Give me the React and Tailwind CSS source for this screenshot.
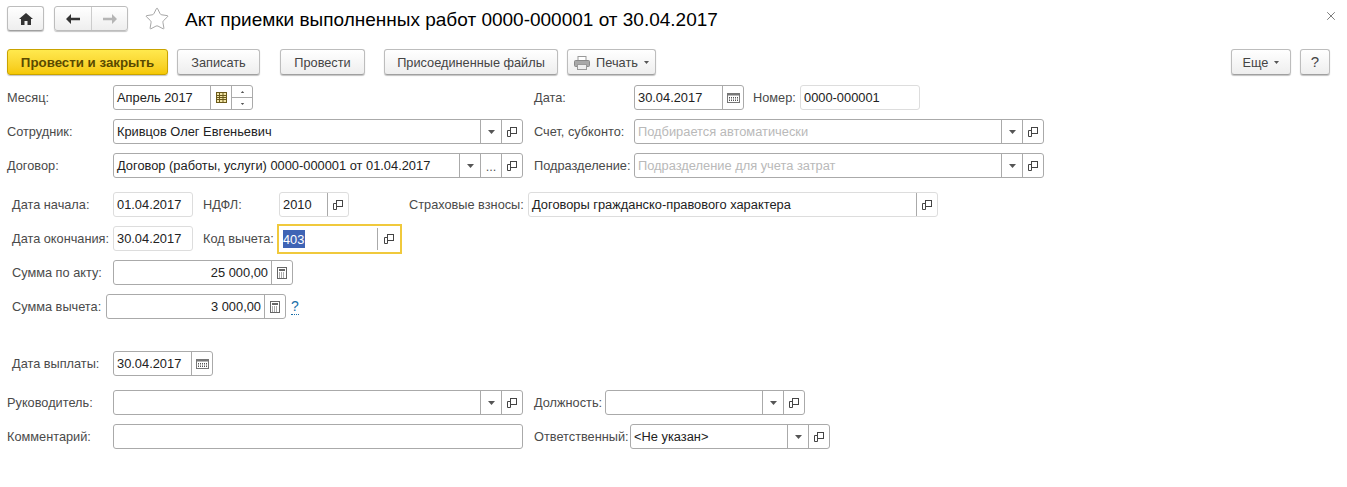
import React from 'react';
import { Star, X } from 'lucide-react';

// --- иконки ---
const HomeIcon = () => (
  <svg width="14" height="12" viewBox="0 0 14 12" fill="#333">
    <path d="M7 0 L14 6 L12 6 L12 12 L8.5 12 L8.5 8 L5.5 8 L5.5 12 L2 12 L2 6 L0 6 Z" />
  </svg>
);

const ArrowIcon = ({ dir, color }) => (
  <svg width="14" height="10" viewBox="0 0 14 10" fill={color} className={dir === 'right' ? 'rotate-180' : ''}>
    <path d="M0 5 L5 0 L5 3.7 L14 3.7 L14 6.3 L5 6.3 L5 10 Z" />
  </svg>
);

const Caret = ({ w = 7, h = 4 }) => (
  <svg width={w} height={h} viewBox="0 0 7 4" fill="#555"><path d="M0 0 H7 L3.5 4 Z" /></svg>
);

const OpenIcon = () => (
  <svg width="10" height="10" viewBox="0 0 10 10" fill="none" stroke="#444" strokeWidth="1">
    <rect x="3.5" y="0.5" width="6" height="6" fill="white" />
    <path d="M3.5 3.5 H0.5 V9.5 H3.5 V6.5" />
  </svg>
);

const CalendarIcon = () => (
  <svg width="13" height="10" viewBox="0 0 13 10">
    <rect x="0.5" y="0.5" width="12" height="9" fill="white" stroke="#777" />
    <rect x="0.5" y="0.5" width="12" height="2" fill="#777" />
    <path d="M2 4.5h9M2 6h9M2 7.5h9" stroke="#555" strokeDasharray="1 1" />
  </svg>
);

const MonthIcon = () => (
  <svg width="11" height="11" viewBox="0 0 11 11" stroke="#6b5a1a" fill="#f3e6a8">
    <rect x="0.5" y="0.5" width="10" height="10" />
    <path d="M0.5 3.5h10M0.5 5.5h10M0.5 7.5h10M3.5 0.5v10M7 0.5v10" fill="none" />
  </svg>
);

const CalcIcon = () => (
  <svg width="10" height="12" viewBox="0 0 10 12">
    <rect x="0.5" y="0.5" width="9" height="11" fill="white" stroke="#666" />
    <rect x="2" y="2" width="6" height="2" fill="#666" />
    <path d="M2 6h6M2 8h6M2 10h6" stroke="#555" strokeDasharray="1 1" />
  </svg>
);

const PrinterIcon = () => (
  <svg width="16" height="14" viewBox="0 0 16 14">
    <rect x="4" y="0.5" width="8" height="5" fill="white" stroke="#999" />
    <rect x="0.5" y="4.5" width="15" height="6" rx="1" fill="#a8a8a8" stroke="#888" />
    <rect x="3.5" y="8.5" width="9" height="5" fill="#eee" stroke="#999" />
  </svg>
);

// --- кнопки командной панели ---
const Btn = ({ className = '', children }) => (
  <button className={`h-[26px] pt-[1px] flex items-center justify-center rounded-[3px] border border-[#bdbdbd] border-b-[#a0a0a0] bg-gradient-to-b from-white to-[#eeeeee] shadow-[0_1px_1px_#c4c4c4] text-[#444] ${className}`}>
    {children}
  </button>
);

// кнопки внутри поля
const cellIcons = {
  drop: <Caret />,
  open: <OpenIcon />,
  calendar: <CalendarIcon />,
  month: <MonthIcon />,
  calc: <CalcIcon />,
  dots: <span className="text-[#555] leading-none mt-[4px]">...</span>,
};

const Field = ({ className = '', value, placeholder, right, pale, cells = [], cellW = 'w-[21px]', spin }) => (
  <div className={`h-[25px] flex shrink-0 rounded-[3px] border bg-white ${pale ? 'border-[#dddddd]' : 'border-[#aaaaaa]'} ${className}`}>
    <div className={`flex-1 min-w-0 px-[3px] leading-[24px] text-[12.85px] whitespace-nowrap overflow-hidden text-[#222] ${right ? 'text-right' : ''}`}>
      {value}
      {placeholder && <span className="text-[#b9b9b9]">{placeholder}</span>}
    </div>
    {cells.map((c, i) => (
      <div key={i} className={`${cellW} shrink-0 flex items-center justify-center border-l ${pale && c !== 'open' ? 'border-[#dddddd]' : 'border-[#aaaaaa]'}`}>
        {cellIcons[c]}
      </div>
    ))}
    {spin && (
      <div className="w-[21px] shrink-0 flex flex-col border-l border-[#aaaaaa] text-[#555]">
        <div className="flex-1 flex items-center justify-center border-b border-[#aaaaaa]">
          <div className="rotate-180 scale-50"><Caret /></div>
        </div>
        <div className="flex-1 flex items-center justify-center">
          <div className="scale-50"><Caret /></div>
        </div>
      </div>
    )}
  </div>
);

const Label = ({ className = '', children }) => (
  <div className={`shrink-0 pt-[1px] whitespace-nowrap text-[#4a4a4a] ${className}`}>{children}</div>
);

export default function App() {
  return (
    <div className="w-[1347px] h-[487px] overflow-hidden bg-white pl-[7px] pt-[6px] text-[12.75px] font-['Liberation_Sans',Arial,sans-serif]">
      {/* заголовок */}
      <div className="h-[25px] flex items-center">
        <Btn className="w-[37px] !h-[25px] !pt-0"><HomeIcon /></Btn>
        <div className="ml-[10px] w-[74px] h-[25px] flex rounded-[3px] border border-[#bdbdbd] bg-gradient-to-b from-white to-[#eeeeee] shadow-[0_1px_1px_#c4c4c4]">
          <div className="w-[37px] flex items-center justify-center border-r border-[#cccccc]"><ArrowIcon color="#333" /></div>
          <div className="flex-1 flex items-center justify-center"><ArrowIcon dir="right" color="#b5b5b5" /></div>
        </div>
        <Star size={26} strokeWidth={0.7} color="#8a8a8a" className="ml-[16px]" />
        <h1 className="ml-[15px] pt-[3px] text-[19px] text-black whitespace-nowrap">Акт приемки выполненных работ 0000-000001 от 30.04.2017</h1>
        <X size={14} strokeWidth={1.3} color="#555" className="ml-auto mr-[9px] -mt-[6px]" />
      </div>

      {/* командная панель */}
      <div className="mt-[18px] flex items-center">
        <Btn className="w-[161px] !border-[#c9a300] !from-[#ffe94d] !to-[#f5c800] font-bold !text-[#5a4a00] text-[13.3px]">Провести и закрыть</Btn>
        <Btn className="ml-[9px] w-[83px]">Записать</Btn>
        <Btn className="ml-[20px] w-[85px]">Провести</Btn>
        <Btn className="ml-[19px] w-[174px]">Присоединенные файлы</Btn>
        <Btn className="ml-[9px] w-[89px] gap-[6px]"><PrinterIcon />Печать<Caret w={5} h={3} /></Btn>
        <Btn className="ml-auto w-[60px] gap-[6px]">Еще<Caret w={5} h={3} /></Btn>
        <Btn className="ml-[9px] mr-[17px] w-[30px] text-[15px]">?</Btn>
      </div>

      {/* шапка документа */}
      <div className="mt-[10px] flex items-center">
        <Label className="w-[106px]">Месяц:</Label>
        <Field className="w-[140px]" value="Апрель 2017" cells={['month']} spin />
        <Label className="ml-[281px] w-[100px]">Дата:</Label>
        <Field className="w-[110px]" value="30.04.2017" cells={['calendar']} />
        <Label className="ml-[9px] w-[47px]">Номер:</Label>
        <Field className="w-[120px]" pale value="0000-000001" />
      </div>

      <div className="mt-[9px] flex items-center">
        <Label className="w-[106px]">Сотрудник:</Label>
        <Field className="w-[410px]" value="Кривцов Олег Евгеньевич" cells={['drop', 'open']} />
        <Label className="ml-[11px] w-[100px]">Счет, субконто:</Label>
        <Field className="w-[410px]" placeholder="Подбирается автоматически" cells={['drop', 'open']} />
      </div>

      <div className="mt-[9px] flex items-center">
        <Label className="w-[106px]">Договор:</Label>
        <Field className="w-[410px]" value="Договор (работы, услуги) 0000-000001 от 01.04.2017" cells={['drop', 'dots', 'open']} />
        <Label className="ml-[11px] w-[100px]">Подразделение:</Label>
        <Field className="w-[410px]" placeholder="Подразделение для учета затрат" cells={['drop', 'open']} />
      </div>

      {/* данные акта */}
      <div className="mt-[14px] flex items-center">
        <Label className="pl-[5px] w-[106px]">Дата начала:</Label>
        <Field className="w-[80px]" pale value="01.04.2017" />
        <Label className="ml-[10px] w-[76px]">НДФЛ:</Label>
        <Field className="w-[70px]" pale value="2010" cells={['open']} />
        <Label className="ml-[60px] w-[119px]">Страховые взносы:</Label>
        <Field className="w-[410px]" pale value="Договоры гражданско-правового характера" cells={['open']} />
      </div>

      <div className="mt-[7px] flex items-center h-[29px]">
        <Label className="pl-[5px] w-[106px]">Дата окончания:</Label>
        <Field className="w-[80px]" pale value="30.04.2017" />
        <Label className="ml-[10px] w-[74px]">Код вычета:</Label>
        <div className="w-[125px] h-[30px] flex border-2 border-[#f0c93c] bg-white">
          <div className="flex-1 px-[4px] flex items-center">
            <span className="bg-[#3f64b5] text-white leading-[17px] pt-[1px] pr-[1px]">403</span>
          </div>
          <div className="my-[2px] w-[23px] flex items-center justify-center border-l border-[#aaaaaa]"><OpenIcon /></div>
        </div>
      </div>

      <div className="mt-[7px] flex items-center">
        <Label className="pl-[5px] w-[106px]">Сумма по акту:</Label>
        <Field className="w-[180px]" right value="25 000,00" cells={['calc']} />
      </div>

      <div className="mt-[9px] flex items-center">
        <Label className="pl-[5px] w-[99px]">Сумма вычета:</Label>
        <Field className="w-[180px]" right value="3 000,00" cells={['calc']} />
        <a className="ml-[5px] text-[#1a6fa8] text-[14px] leading-[15px] border-b border-dotted border-[#1a6fa8]">?</a>
      </div>

      <div className="mt-[32px] flex items-center">
        <Label className="pl-[5px] w-[106px]">Дата выплаты:</Label>
        <Field className="w-[100px]" value="30.04.2017" cells={['calendar']} />
      </div>

      {/* подвал */}
      <div className="mt-[14px] flex items-center">
        <Label className="w-[106px]">Руководитель:</Label>
        <Field className="w-[410px]" cells={['drop', 'open']} />
        <Label className="ml-[11px] w-[71px]">Должность:</Label>
        <Field className="w-[200px]" cells={['drop', 'open']} />
      </div>

      <div className="mt-[9px] flex items-center">
        <Label className="w-[106px]">Комментарий:</Label>
        <Field className="w-[410px]" />
        <Label className="ml-[11px] w-[96px]">Ответственный:</Label>
        <Field className="w-[200px]" value="<Не указан>" cells={['drop', 'open']} />
      </div>
    </div>
  );
}
